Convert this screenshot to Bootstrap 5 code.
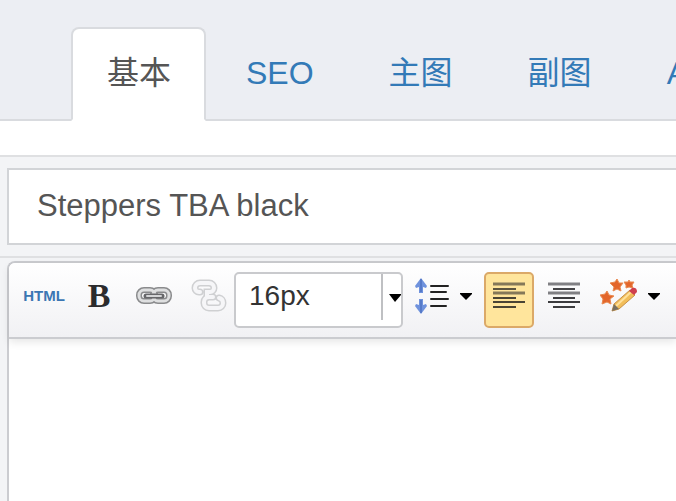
<!DOCTYPE html>
<html lang="zh-CN">
<head>
<meta charset="utf-8">
<meta name="viewport" content="width=device-width, initial-scale=1">
<title>Steppers TBA black</title>
<link href="https://cdn.jsdelivr.net/npm/bootstrap@5.3.0/dist/css/bootstrap.min.css" rel="stylesheet">
<style>
body { font-family: "Liberation Sans", "Noto Sans CJK SC", sans-serif; background: #f3f4f6; color: #555; }
.tab-strip { background: #eceef3; padding-top: 27px; }
.tab-strip .nav-tabs { --bs-nav-tabs-border-width: 2px; --bs-nav-tabs-border-color: #d9dbdf; padding-left: 71px; gap: 4px; }
.tab-strip .nav-link { font-size: 32px; font-weight: 400; line-height: 48px; padding: 20px 33px 22px 34px; color: #337ab7; border-radius: 8px 8px 0 0; white-space: nowrap; }
.tab-strip .nav-link.active { color: #555; background: #fff; border-color: #d9dbdf #d9dbdf #fff; }
.spacer-band { height: 36px; border-bottom: 2px solid #dfe0e2; }
.name-row { padding: 11px 0 11px 7px; border-bottom: 2px solid #dfe0e2; }
.name-row .form-control { font-size: 31px; line-height: 48px; padding: 12px 28px 13px; color: #555; border: 2px solid #d2d4d7; border-right: 0; border-radius: 0; }
.editor-row { padding: 3px 0 0 7px; }
.editor-box { border: 2px solid #cbccd0; border-width: 2px 0 0 2px; border-radius: 8px 0 0 0; background: #fff; }
.tool-strip { height: 76px; padding: 9px 0 9px 10px; border-bottom: 2px solid #cbccd0; border-radius: 6px 0 0 0; background: linear-gradient(#fff, #f1f1f4); box-shadow: 0 3px 8px rgba(0,0,0,.1); }
.tool-group { gap: 5px; }
.tool-group + .tool-group { margin-left: 5px; }
.tool { width: 50px; height: 56px; padding: 0 0 8px; border: 2px solid transparent; border-radius: 5px; }
.tool-wide { width: 72px; gap: 10px; }
.tool.active { background: #ffe59c; border-color: #dba968; }
.tool-html { font: bold 15px "Liberation Sans", sans-serif; color: #3b76b3; padding-bottom: 10px; }
.tool-bold { font: bold 34px "Liberation Serif", serif; color: #2b2b2d; }
.size-pick { width: 169px; height: 56px; margin-right: 4px; padding: 0 0 8px 13px; font-size: 28px; line-height: 40px; color: #333; border: 2px solid #c9cacd; border-radius: 5px;
  background: #fff url("data:image/svg+xml,%3Csvg xmlns='http://www.w3.org/2000/svg' width='20' height='48'%3E%3Cpath d='M1 0V46' stroke='%23bfc0c3' stroke-width='2'/%3E%3Cpath d='M8 20h12v1l-6 7z' fill='%23000'/%3E%3C/svg%3E") no-repeat right top; }
.edit-area { min-height: 160px; border: 0; border-radius: 0; background: transparent; resize: none; font-size: 28px; }
</style>
<script src="https://cdn.jsdelivr.net/npm/bootstrap@5.3.0/dist/js/bootstrap.bundle.min.js"></script>
</head>
<body>
<div class="d-flex flex-column min-vh-100 overflow-hidden">
  <header class="tab-strip">
    <ul class="nav nav-tabs flex-nowrap">
      <li class="nav-item"><a class="nav-link active" aria-current="page" href="#basic">基本</a></li>
      <li class="nav-item"><a class="nav-link" href="#seo">SEO</a></li>
      <li class="nav-item"><a class="nav-link" href="#main-image">主图</a></li>
      <li class="nav-item"><a class="nav-link" href="#sub-image">副图</a></li>
      <li class="nav-item"><a class="nav-link" href="#a">A</a></li>
    </ul>
  </header>
  <div class="spacer-band bg-white"></div>
  <div class="name-row">
    <input class="form-control" type="text" aria-label="名称" value="Steppers TBA black">
  </div>
  <div class="editor-row d-flex flex-column flex-grow-1">
    <div class="editor-box d-flex flex-column flex-grow-1">
      <div class="tool-strip d-flex flex-nowrap align-items-start" role="toolbar" aria-label="编辑工具">
        <div class="tool-group d-flex flex-shrink-0">
        <button type="button" class="tool btn tool-html d-flex align-items-center justify-content-center">HTML</button>
        <button type="button" class="tool btn tool-bold d-flex align-items-center justify-content-center">B</button>
        <button type="button" class="tool btn d-flex align-items-center justify-content-center" aria-label="插入链接">
          <svg width="38" height="20" viewBox="0 0 38 20" fill="none">
            <g stroke="#8a8b8d" stroke-width="6"><rect x="4" y="4" width="16" height="11" rx="5"/><rect x="18" y="4" width="16" height="11" rx="5"/></g>
            <g stroke="#dedfe0" stroke-width="3"><rect x="4" y="4" width="16" height="11" rx="5"/><rect x="18" y="4" width="16" height="11" rx="5"/></g>
            <path d="M11 10H27" stroke="#66676a" stroke-width="5" stroke-linecap="round"/><path d="M12 10H26" stroke="#d4d5d7" stroke-width="2" stroke-linecap="round"/>
          </svg>
        </button>
        <button type="button" class="tool btn d-flex align-items-center justify-content-center" aria-label="取消链接">
          <svg width="36" height="34" viewBox="0 0 36 34" fill="none" stroke-linecap="round">
            <g stroke="#cfd0d2" stroke-width="7"><path d="M9 13H8a4 4 0 0 1-4-4a5 5 0 0 1 5-5h9a5 5 0 0 1 5 5a4 4 0 0 1-4 4h-3v5"/><path d="M22 18h-4a5 5 0 0 0-5 5v1a5 5 0 0 0 5 5h9a5 5 0 0 0 5-5a5 5 0 0 0-4-5"/></g>
            <g stroke="#f6f6f8" stroke-width="4"><path d="M9 13H8a4 4 0 0 1-4-4a5 5 0 0 1 5-5h9a5 5 0 0 1 5 5a4 4 0 0 1-4 4h-3v5"/><path d="M22 18h-4a5 5 0 0 0-5 5v1a5 5 0 0 0 5 5h9a5 5 0 0 0 5-5a5 5 0 0 0-4-5"/></g>
          </svg>
        </button>
        </div>
        <select class="size-pick form-select flex-shrink-0" aria-label="字号"><option>16px</option><option>18px</option><option>24px</option></select>
        <div class="tool-group d-flex flex-shrink-0">
        <button type="button" class="tool tool-wide btn d-flex align-items-center justify-content-center" aria-label="行高">
          <svg class="flex-shrink-0" width="36" height="38" viewBox="0 0 36 38">
            <path d="M7 1l6 8-1 2-3-1v6H5v-6l-3 1-1-2zM7 37l6-8-1-2-3 1v-6H5v6l-3-1-1 2z" fill="#6f92dd"/>
            <path d="M7 2v13M7 36V23" stroke="#3f63b4" stroke-width="1"/>
            <path d="M17 9h17M17 15h15M17 22h17M17 29h15" stroke="#222" stroke-width="2" stroke-linecap="round"/>
          </svg>
          <svg class="flex-shrink-0" width="12" height="8" viewBox="0 0 12 8"><path d="M0 1h12v1L6 8 0 2z" fill="#000"/></svg>
        </button>
        <button type="button" class="tool btn active d-flex align-items-center justify-content-center" aria-label="左对齐" aria-pressed="true">
          <svg width="32" height="28" viewBox="0 0 32 28" stroke-width="2"><path d="M0 2h32" stroke="#857858" stroke-width="3"/><path d="M0 7h23" stroke="#5c543f"/><path d="M0 11h32" stroke="#857858" stroke-width="3"/><path d="M0 16h23M0 20h32M0 25h23" stroke="#4a4434"/></svg>
        </button>
        </div>
        <div class="tool-group d-flex flex-shrink-0">
        <button type="button" class="tool btn d-flex align-items-center justify-content-center" aria-label="居中对齐">
          <svg width="32" height="28" viewBox="0 0 32 28" stroke-width="2"><path d="M0 2h32" stroke="#808084" stroke-width="3"/><path d="M5 7h22" stroke="#444447"/><path d="M0 11h32" stroke="#808084" stroke-width="3"/><path d="M5 16h22M0 20h32M5 25h22" stroke="#3c3c3f"/></svg>
        </button>
        <button type="button" class="tool tool-wide btn d-flex align-items-center justify-content-center" aria-label="清理格式">
          <svg class="flex-shrink-0" width="38" height="36" viewBox="0 0 38 36">
            <g fill="#e3662b" stroke="#e98a50" stroke-width="1" stroke-linejoin="round">
              <path d="M17 1l2 4 4 0-3 4 1 4-4-2-4 2 1-4-4-4 5-1z"/><path d="M7 13l2 4 5 1-4 3 1 5-4-2-5 2 1-5-3-4 5-1z"/><path d="M29 2l1 2 4 0-2 3 1 3-4-1-3 1 0-3-2-3 4 0z"/>
            </g>
            <path d="M12 33l2-7L30 12l5 5-16 14z" fill="#f1bd59" stroke="#c89147"/>
            <path d="M16 28L31 14" stroke="#ffe09a" stroke-width="2"/>
            <path d="M12 33l2-7 5 5z" fill="#777063"/>
            <path d="M29 13l3-3q5-1 5 4l-3 3z" fill="#cf3f4d"/>
          </svg>
          <svg class="flex-shrink-0" width="12" height="8" viewBox="0 0 12 8"><path d="M0 1h12v1L6 8 0 2z" fill="#000"/></svg>
        </button>
        </div>
      </div>
      <textarea class="edit-area form-control flex-grow-1" aria-label="内容"></textarea>
    </div>
  </div>
</div>
</body>
</html>
